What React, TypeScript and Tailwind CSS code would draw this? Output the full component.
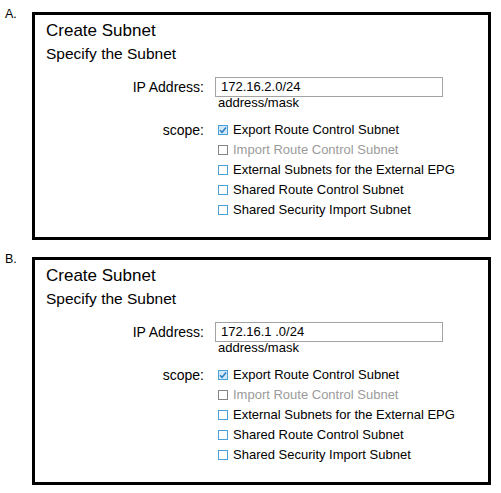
import React from 'react';

type Scope = { label: string; checked?: boolean; disabled?: boolean };

const scopes: Scope[] = [
  { label: 'Export Route Control Subnet', checked: true },
  { label: 'Import Route Control Subnet', disabled: true },
  { label: 'External Subnets for the External EPG' },
  { label: 'Shared Route Control Subnet' },
  { label: 'Shared Security Import Subnet' },
];

function Checkbox({ checked, disabled }: { checked?: boolean; disabled?: boolean }) {
  if (checked) {
    return (
      <span className="flex h-[10px] w-[10px] shrink-0 items-center justify-center border border-[#4a9fd8] bg-[#d3e8f8]">
        <svg width="8" height="8" viewBox="0 0 8 8">
          <path d="M1 4.2 L3.1 6.3 L7 1.6" fill="none" stroke="#2b7fc4" strokeWidth="1.5" />
        </svg>
      </span>
    );
  }
  return (
    <span
      className={
        disabled
          ? 'h-[10px] w-[10px] shrink-0 border border-[#858585] bg-white'
          : 'h-[10px] w-[10px] shrink-0 border border-[#4a9fd8] bg-white'
      }
    />
  );
}

function SubnetPanel({ ip }: { ip: string }) {
  return (
    <div className="h-[228px] w-[459px] border-[3px] border-black pl-[11px] pt-[6px] text-black">
      <div className="text-[17px] leading-[20px]">Create Subnet</div>
      <div className="mt-[3px] text-[15.5px] leading-[20px]">Specify the Subnet</div>

      <div className="mt-[13px] flex items-center">
        <div className="w-[158px] text-right text-[14px] leading-[20px]">IP Address:</div>
        <div className="ml-[11px] h-[20px] w-[228px] border border-[#a3a3a3] pl-[5px] text-[13px] leading-[18px]">
          {ip}
        </div>
      </div>
      <div className="ml-[169px] pl-[3px] text-[13px] leading-[12px]">address/mask</div>

      <div className="mt-[11px] flex items-start">
        <div className="w-[158px] text-right text-[14px] leading-[20px]">scope:</div>
        <div className="ml-[11px] flex flex-col pl-[3px]">
          {scopes.map((s) => (
            <div key={s.label} className="flex h-[20px] items-center gap-[5px]">
              <Checkbox checked={s.checked} disabled={s.disabled} />
              <span
                className={
                  s.disabled
                    ? 'text-[13px] leading-[20px] text-[#9b9b9b]'
                    : 'text-[13px] leading-[20px] text-black'
                }
              >
                {s.label}
              </span>
            </div>
          ))}
        </div>
      </div>
    </div>
  );
}

export default function App() {
  return (
    <div
      className="h-[493px] w-[501px] overflow-hidden bg-white pl-[5px] pt-[7px]"
      style={{ fontFamily: '"Liberation Sans", Arial, sans-serif' }}
    >
      <div className="flex">
        <div className="w-[27px] text-[12.5px] leading-[15px]">A.</div>
        <div className="mt-[5px]">
          <SubnetPanel ip="172.16.2.0/24" />
        </div>
      </div>
      <div className="mt-[12px] flex">
        <div className="w-[27px] text-[12.5px] leading-[15px]">B.</div>
        <div className="mt-[5px]">
          <SubnetPanel ip="172.16.1 .0/24" />
        </div>
      </div>
    </div>
  );
}
